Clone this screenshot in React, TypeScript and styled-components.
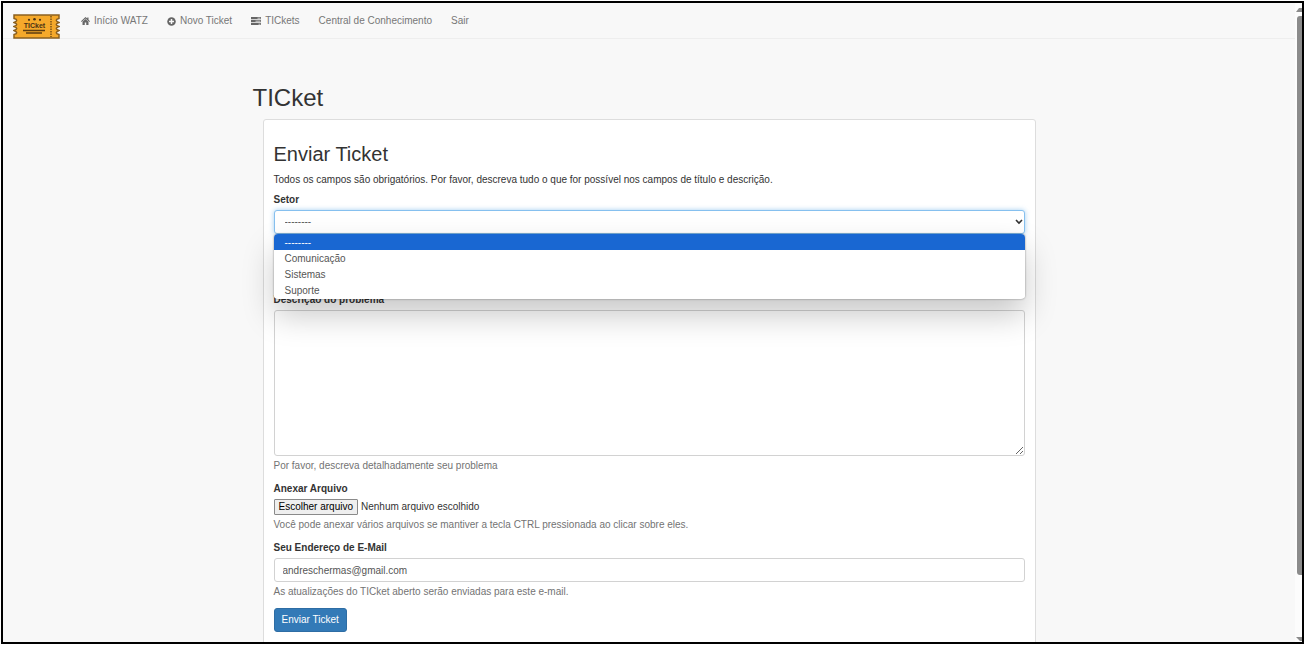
import React, { useRef, useState } from "react";
import styled, { createGlobalStyle, css } from "styled-components";

const GlobalStyle = createGlobalStyle`
  *, *::before, *::after { box-sizing: border-box; }
  body {
    margin: 0;
    background: #fff;
    color: #333;
    font: 10px/14px "Liberation Sans", Arial, sans-serif;
  }
  button, input, select, textarea { font: inherit; color: inherit; }
`;

const Page = styled.div`
  height: 100vh;
  padding: 1px;
`;

const Frame = styled.div`
  display: flex;
  height: 100%;
  border: 2px solid #000;
  background: #f8f8f8;
  overflow: hidden;
`;

const Content = styled.div`
  flex: 1;
  min-width: 0;
  overflow: hidden;
`;

const NavBar = styled.header`
  display: flex;
  align-items: flex-start;
  height: 36px;
  padding: 11px 10px 0;
  border-bottom: 1px solid #eee;
`;

const Brand = styled.a`
  display: block;
  width: 47px;
  height: 25px;
  svg { display: block; }
`;

const NavLinks = styled.nav`
  display: flex;
  gap: 19px;
  margin-left: 21px;
`;

const NavLink = styled.a`
  display: flex;
  align-items: center;
  gap: 4px;
  color: #777;
  text-decoration: none;
  white-space: nowrap;
`;

const Container = styled.main`
  max-width: 793px;
  margin: 0 auto;
  padding-top: 45px;
`;

const PageTitle = styled.h1`
  margin: 0;
  font-size: 24px;
  line-height: 28px;
  font-weight: 400;
`;

const Card = styled.section`
  margin: 7px 10px 20px;
  padding: 22px 10px;
  border: 1px solid #ddd;
  border-radius: 3px;
  background: #fff;
`;

const CardTitle = styled.h2`
  margin: 0;
  font-size: 20px;
  line-height: 24px;
  font-weight: 400;
`;

const Intro = styled.p`
  margin: 7px 0 6px;
`;

const Form = styled.form`
  display: flex;
  flex-direction: column;
  gap: 9px;
`;

const Field = styled.div`
  display: flex;
  flex-direction: column;
  gap: 3px;
`;

const TitleField = styled(Field)`
  padding-top: 17px;
`;

const Label = styled.label`
  font-weight: 700;
`;

const Help = styled.span`
  color: #737373;
`;

const control = css`
  display: block;
  width: 100%;
  border: 1px solid #d2d2d2;
  border-radius: 3px;
  background: #fff;
  color: #555;
  outline: none;
`;

const TextInput = styled.input`
  ${control}
  height: 24px;
  padding: 0 8px;
`;

const TextArea = styled.textarea`
  ${control}
  height: 146px;
  padding: 4px 8px;
  resize: vertical;
`;

const SelectWrap = styled.div`
  position: relative;
`;

const Select = styled.select<{ $active: boolean }>`
  ${control}
  appearance: none;
  height: 24px;
  padding: 0 10px;
  border-color: ${(p) => (p.$active ? "#86c0ef" : "#d2d2d2")};
  box-shadow: ${(p) => (p.$active ? "0 0 5px rgba(102, 175, 233, 0.6)" : "none")};
`;

const Chevron = styled.svg`
  position: absolute;
  top: 9px;
  right: 2px;
  pointer-events: none;
`;

const OptionList = styled.ul`
  position: absolute;
  z-index: 2;
  top: 100%;
  left: 0;
  right: 0;
  margin: 0;
  padding: 0 0 1px;
  list-style: none;
  overflow: hidden;
  border-radius: 4px;
  background: #fff;
  box-shadow: 0 0 2px rgba(0, 0, 0, 0.5), 0 16px 32px rgba(0, 0, 0, 0.22);
`;

const Option = styled.li<{ $selected: boolean }>`
  padding: 2px 11px 0;
  background: ${(p) => (p.$selected ? "#1967d2" : "#fff")};
  color: ${(p) => (p.$selected ? "#fff" : "#555")};
  cursor: default;
`;

const FileRow = styled.div`
  display: flex;
  align-items: center;
  gap: 3px;
`;

const FileButton = styled.button`
  height: 16px;
  padding: 0 4px;
  border: 1px solid #8a8a8a;
  border-radius: 1px;
  background: #efefef;
  color: #000;
  line-height: 14px;
`;

const SubmitButton = styled.button`
  align-self: flex-start;
  height: 24px;
  padding: 0 7px;
  border: 1px solid #2e6da4;
  border-radius: 3px;
  background: #337ab7;
  color: #fff;
`;

const ScrollBar = styled.div`
  display: flex;
  flex-direction: column;
  align-items: flex-end;
  justify-content: space-between;
  width: 7px;
  padding: 4px 0 0;
  background: #fcfcfc;
`;

const Track = styled.div`
  flex: 1;
  width: 5px;
  margin: 4px 0 0;
`;

const Thumb = styled.div`
  height: 90%;
  border-radius: 3px 0 0 3px;
  background: #8b8b8b;
`;

const TicketLogo = () => (
  <svg width="47" height="25" viewBox="0 0 47 25" role="img" aria-label="TICket">
    <path
      d="M1 1H46V4.500Q40.500 6 46 8.500Q40.500 10.500 46 12.500Q40.500 14.500 46 16.500Q40.500 19 46 20.500V24H1V20.500Q6.500 19 1 16.500Q6.500 14.500 1 12.500Q6.500 10.500 1 8.500Q6.500 6 1 4.500Z"
      fill="#f5a92b"
      stroke="#8a6020"
      strokeWidth="1.500"
    />
    <path d="M38 2V23" stroke="#5c3c12" strokeWidth="1.200" strokeDasharray="1.500 1" />
    <g fill="#4a3215">
      <circle cx="16" cy="5.800" r="1.100" />
      <circle cx="21.500" cy="5.200" r="1.300" />
      <circle cx="27" cy="5.800" r="1.100" />
    </g>
    <text
      x="21.500"
      y="14"
      textAnchor="middle"
      fontFamily="Liberation Sans, Arial, sans-serif"
      fontWeight="700"
      fontSize="7"
      fill="#4a3215"
    >
      TICket
    </text>
    <path d="M10 16.500H32M13 19H29" stroke="#5c3c12" strokeWidth="1.300" />
  </svg>
);

const HomeIcon = () => (
  <svg width="9" height="8" viewBox="0 0 18 16" fill="#666" aria-hidden="true">
    <path d="M9 0L0 8.500L1.500 10L9 3L16.500 10L18 8.500L15 5.500V1H12.500V3.200Z" />
    <path d="M9 4L3 9.500V16H7.500V11H10.500V16H15V9.500Z" />
  </svg>
);

const PlusIcon = () => (
  <svg width="9" height="9" viewBox="0 0 18 18" aria-hidden="true">
    <circle cx="9" cy="9" r="8.500" fill="#666" />
    <path d="M9 4V14M4 9H14" stroke="#f8f8f8" strokeWidth="3" />
  </svg>
);

const TasksIcon = () => (
  <svg width="10" height="8" viewBox="0 0 20 16" aria-hidden="true">
    <path d="M0 0H20V4.500H0ZM0 6H20V10.500H0ZM0 12H20V16H0Z" fill="#666" />
    <path d="M13 1.500H19V3H13ZM9 7.500H19V9H9ZM15 13.500H19V15H15Z" fill="#f8f8f8" />
  </svg>
);

const Arrow = ({ down = false }: { down?: boolean }) => (
  <svg width="6" height="5" viewBox="0 0 6 5" aria-hidden="true">
    <path d={down ? "M0 0H6V4H4Z" : "M0 5H6V1H3Z"} fill="#8b8b8b" />
  </svg>
);

const sectors = ["--------", "Comunicação", "Sistemas", "Suporte"];

export default function App() {
  const [open, setOpen] = useState(true);
  const [sector, setSector] = useState(sectors[0]);
  const [fileName, setFileName] = useState("Nenhum arquivo escolhido");
  const fileInput = useRef<HTMLInputElement>(null);

  return (
    <Page>
      <GlobalStyle />
      <Frame>
        <Content>
          <NavBar>
            <Brand href="#">
              <TicketLogo />
            </Brand>
            <NavLinks>
              <NavLink href="#"><HomeIcon />Início WATZ</NavLink>
              <NavLink href="#"><PlusIcon />Novo Ticket</NavLink>
              <NavLink href="#"><TasksIcon />TICkets</NavLink>
              <NavLink href="#">Central de Conhecimento</NavLink>
              <NavLink href="#">Sair</NavLink>
            </NavLinks>
          </NavBar>
          <Container>
            <PageTitle>TICket</PageTitle>
            <Card>
              <CardTitle>Enviar Ticket</CardTitle>
              <Intro>
                Todos os campos são obrigatórios. Por favor, descreva tudo o que for possível nos campos de título e
                descrição.
              </Intro>
              <Form onSubmit={(e) => e.preventDefault()}>
                <Field>
                  <Label htmlFor="setor">Setor</Label>
                  <SelectWrap>
                    <Select
                      id="setor"
                      $active={open}
                      value={sector}
                      onChange={(e) => setSector(e.target.value)}
                      onMouseDown={(e) => {
                        e.preventDefault();
                        setOpen(!open);
                      }}
                    >
                      {sectors.map((s) => (
                        <option key={s}>{s}</option>
                      ))}
                    </Select>
                    <Chevron width="8" height="6" viewBox="0 0 8 6" aria-hidden="true">
                      <path d="M1 1L4 4L7 1" fill="none" stroke="#333" strokeWidth="1.600" />
                    </Chevron>
                    {open && (
                      <OptionList role="listbox" aria-label="Setor">
                        {sectors.map((s) => (
                          <Option
                            key={s}
                            role="option"
                            aria-selected={s === sector}
                            $selected={s === sector}
                            onClick={() => {
                              setSector(s);
                              setOpen(false);
                            }}
                          >
                            {s}
                          </Option>
                        ))}
                      </OptionList>
                    )}
                  </SelectWrap>
                </Field>
                <TitleField>
                  <TextInput id="titulo" type="text" aria-label="Título" />
                </TitleField>
                <Field>
                  <Label htmlFor="descricao">Descrição do problema</Label>
                  <TextArea id="descricao" />
                  <Help>Por favor, descreva detalhadamente seu problema</Help>
                </Field>
                <Field>
                  <Label htmlFor="anexo">Anexar Arquivo</Label>
                  <FileRow>
                    <FileButton id="anexo" type="button" onClick={() => fileInput.current?.click()}>
                      Escolher arquivo
                    </FileButton>
                    <span>{fileName}</span>
                    <input
                      ref={fileInput}
                      type="file"
                      multiple
                      hidden
                      onChange={(e) => setFileName(e.target.files?.[0]?.name ?? "Nenhum arquivo escolhido")}
                    />
                  </FileRow>
                  <Help>
                    Você pode anexar vários arquivos se mantiver a tecla CTRL pressionada ao clicar sobre eles.
                  </Help>
                </Field>
                <Field>
                  <Label htmlFor="email">Seu Endereço de E-Mail</Label>
                  <TextInput id="email" type="email" defaultValue="andreschermas@gmail.com" />
                  <Help>As atualizações do TICket aberto serão enviadas para este e-mail.</Help>
                </Field>
                <SubmitButton type="submit">Enviar Ticket</SubmitButton>
              </Form>
            </Card>
          </Container>
        </Content>
        <ScrollBar aria-hidden="true">
          <Arrow />
          <Track>
            <Thumb />
          </Track>
          <Arrow down />
        </ScrollBar>
      </Frame>
    </Page>
  );
}
